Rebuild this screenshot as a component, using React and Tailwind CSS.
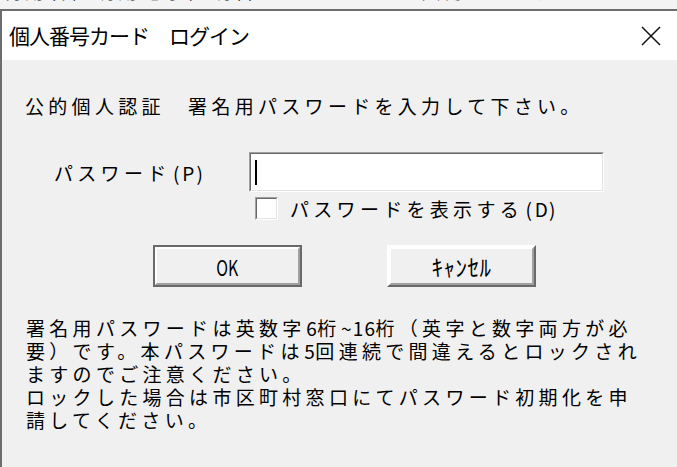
import React from 'react'

// half-width character cell, so digits and brackets keep the fixed pitch of the dialog font
function H({ children }) {
  return <span className="inline-block w-[11.65px] text-center tracking-normal">{children}</span>
}

function Sunken({ className, children }) {
  return (
    <div className={`border border-t-[#a0a0a0] border-l-[#a0a0a0] border-r-white border-b-white ${className}`}>
      <div className="w-full h-full border border-t-[#696969] border-l-[#696969] border-r-[#e3e3e3] border-b-[#e3e3e3] bg-white flex items-center">
        {children}
      </div>
    </div>
  )
}

function Button({ primary, children }) {
  const outer = primary
    ? 'border-2 border-[#696969]'
    : 'border-2 border-t-white border-l-white border-r-[#696969] border-b-[#696969]'
  return (
    <button className={`w-[149px] h-[42px] bg-[#f0f0f0] ${outer}`}>
      <div className="w-full h-full border-2 border-t-white border-l-white border-r-[#a0a0a0] border-b-[#a0a0a0] flex items-center justify-center leading-none">
        {children}
      </div>
    </button>
  )
}

export default function App() {
  return (
    <div className="w-[677px] h-[467px] overflow-hidden bg-[#f0f0f0] flex flex-col text-black font-['Noto_Sans_CJK_JP',sans-serif]">
      {/* the window behind, only the bottom of its last text row shows */}
      <div className="h-[9px] overflow-hidden bg-[#f3f3f3] pl-[2px]">
        <div className="-mt-[21px] text-[19px] tracking-[4.3px] leading-[23px] whitespace-nowrap">
          利用者証明用電子証明書のパスワードを入力してください
        </div>
      </div>

      <div className="flex-1 flex flex-col border-t-2 border-l-2 border-[#6d6d6d]">
        <div className="h-[49px] bg-white flex items-center justify-between pl-[7px] pr-[16px]">
          <span className="text-[21px] tracking-[-1px] leading-none">個人番号カード　ログイン</span>
          <svg width="20" height="20" viewBox="0 0 20 20" className="text-[#111]">
            <path d="M1 1L19 19M19 1L1 19" stroke="currentColor" strokeWidth="1.5" fill="none" />
          </svg>
        </div>

        <div className="flex-1 pt-[34px] text-[19px] tracking-[4.3px] leading-[23px] whitespace-nowrap">
          <p className="pl-[23px]">公的個人認証　署名用パスワードを入力して下さい。</p>

          <div className="mt-[35px] flex items-center pl-[52px]">
            <span className="w-[195px]">
              パスワード<H>(</H><H>P</H><H>)</H>
            </span>
            <Sunken className="w-[355px] h-[40px]">
              <div className="ml-[4px] w-[2px] h-[25px] bg-black" />
            </Sunken>
          </div>

          <label className="mt-[5px] flex items-center pl-[253px]">
            <Sunken className="w-[23px] h-[23px]" />
            <span className="ml-[12px]">
              パスワードを表示する<H>(</H><H>D</H><H>)</H>
            </span>
          </label>

          <div className="mt-[25px] flex gap-[85px] pl-[151px]">
            <Button primary>
              <span className="inline-block text-[22px] tracking-normal scale-x-[0.72]">OK</span>
            </Button>
            <Button>
              <span className="text-[23px] tracking-[0.5px]">ｷｬﾝｾﾙ</span>
            </Button>
          </div>

          <div className="mt-[29px] pl-[24px]">
            <p>署名用パスワードは英数字<H>6</H>桁<H>~</H><H>1</H><H>6</H>桁（英字と数字両方が必</p>
            <p>要）です。本パスワードは<H>5</H>回連続で間違えるとロックされ</p>
            <p>ますのでご注意ください。</p>
            <p>ロックした場合は市区町村窓口にてパスワード初期化を申</p>
            <p>請してください。</p>
          </div>
        </div>
      </div>
    </div>
  )
}
